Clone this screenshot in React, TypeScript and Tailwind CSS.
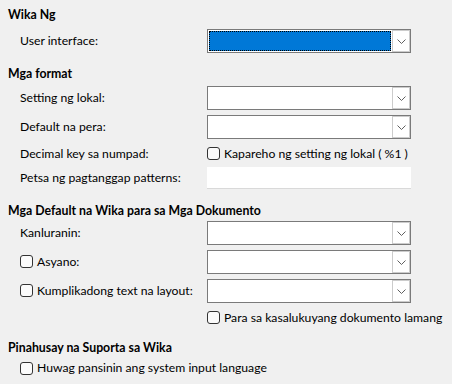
import React from "react";

const font = { fontFamily: '"Segoe UI", Lato, "Noto Sans", sans-serif' };

function Chevron() {
  return (
    <svg width="9" height="5" viewBox="0 0 9 5" className="block">
      <path d="M0.5 0.5 L4.5 4.5 L8.5 0.5" fill="none" stroke="#606060" strokeWidth="1" />
    </svg>
  );
}

function Dropdown({ focused = false }: { focused?: boolean }) {
  return (
    <div className="flex h-[24px] w-[204px] border border-[#7a7a7a] bg-white">
      <div className="flex-1 p-[1px]">
        {focused && (
          <div className="h-full w-full border border-dotted border-black bg-[#0078d7]" />
        )}
      </div>
      <div className="flex w-[18px] items-center justify-center border border-[#cccccc] bg-white">
        <Chevron />
      </div>
    </div>
  );
}

function Check() {
  return <span className="inline-block h-[13px] w-[13px] shrink-0 rounded-[3px] border border-[#333333] bg-[#fbfbfb]" />;
}

function Header({ children, className = "" }: { children: React.ReactNode; className?: string }) {
  return (
    <div className={`flex h-[20px] items-center pl-[8px] text-[12.3px] font-bold ${className}`}>{children}</div>
  );
}

function Row({ label, children, className = "", h = "h-[24px]" }: { label: React.ReactNode; children: React.ReactNode; className?: string; h?: string }) {
  return (
    <div className={`flex ${h} items-center ${className}`}>
      <div className="flex w-[207px] items-center whitespace-nowrap pl-[20px] text-[12.2px]">{label}</div>
      {children}
    </div>
  );
}

export default function App() {
  return (
    <div className="h-[384px] w-[452px] bg-[#f0f0f0] pt-[5px] text-black" style={font}>
      <Header>Wika Ng</Header>
      <Row label="User interface:" className="mt-[4px]">
        <Dropdown focused />
      </Row>

      <Header className="mt-[11px]">Mga format</Header>
      <Row label="Setting ng lokal:" className="mt-[2px]">
        <Dropdown />
      </Row>
      <Row label="Default na pera:" className="mt-[5px]">
        <Dropdown />
      </Row>
      <Row label="Decimal key sa numpad:" className="mt-[5px]" h="h-[20px]">
        <div className="flex items-center gap-[4px] whitespace-nowrap text-[12.2px]">
          <Check />
          <span>Kapareho ng setting ng lokal ( %1 )</span>
        </div>
      </Row>
      <Row label="Petsa ng pagtanggap patterns:" className="mt-[3px]" h="h-[22px]">
        <div className="h-[22px] w-[204px] border-b border-[#d9d9d9] bg-white" />
      </Row>

      <Header className="mt-[12px]">Mga Default na Wika para sa Mga Dokumento</Header>
      <Row label="Kanluranin:">
        <Dropdown />
      </Row>
      <Row
        label={
          <span className="flex items-center gap-[4px]">
            <Check />
            Asyano:
          </span>
        }
        className="mt-[5px]"
      >
        <Dropdown />
      </Row>
      <Row
        label={
          <span className="flex items-center gap-[4px]">
            <Check />
            Kumplikadong text na layout:
          </span>
        }
        className="mt-[5px]"
      >
        <Dropdown />
      </Row>
      <Row label="" className="mt-[5px]" h="h-[20px]">
        <div className="flex items-center gap-[4px] whitespace-nowrap text-[12.2px]">
          <Check />
          <span>Para sa kasalukuyang dokumento lamang</span>
        </div>
      </Row>

      <Header className="mt-[10px]">Pinahusay na Suporta sa Wika</Header>
      <div className="flex h-[20px] items-center gap-[4px] pl-[20px] text-[12.2px]">
        <Check />
        <span>Huwag pansinin ang system input language</span>
      </div>
    </div>
  );
}
